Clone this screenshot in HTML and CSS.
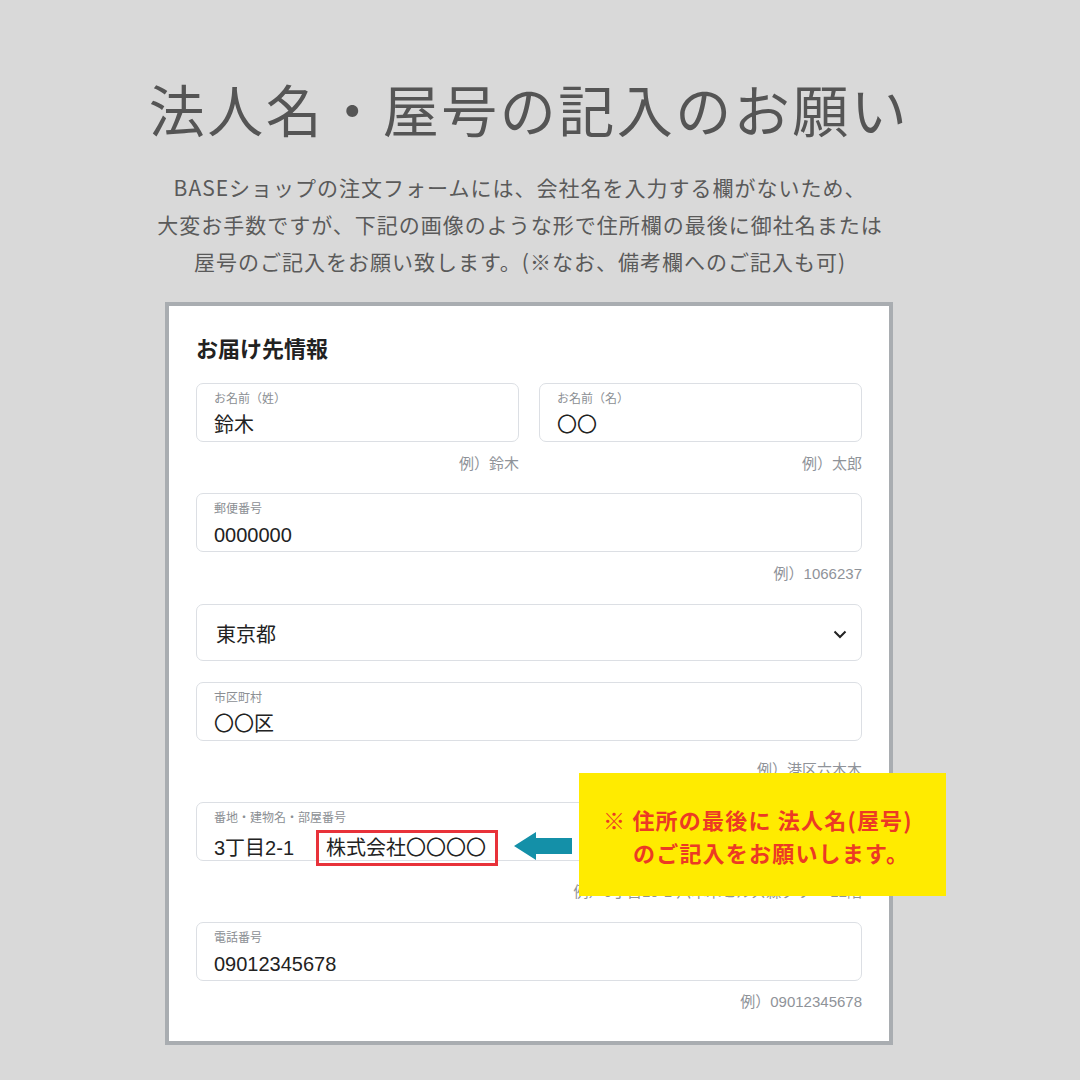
FILE: index.html
```html
<!DOCTYPE html>
<html lang="ja">

<head>
    <meta charset="UTF-8">
    <meta name="viewport" content="width=device-width, initial-scale=1.0">
    <title>法人名・屋号の記入のお願い</title>
    <link rel="stylesheet" href="styles.css">
</head>

<body>
    <main class="page">
        <h1 class="title">法人名・屋号の記入のお願い</h1>
        <p class="lead">
            BASEショップの注文フォームには、会社名を入力する欄がないため、<br>
            大変お手数ですが、下記の画像のような形で住所欄の最後に御社名または<br>
            屋号のご記入をお願い致します。(※なお、備考欄へのご記入も可)
        </p>

        <section class="card">
            <h2 class="card-title">お届け先情報</h2>

            <!-- name row: two fields side by side -->
            <div class="row">
                <div class="col">
                    <div class="field">
                        <span class="label">お名前（姓）</span>
                        <span class="value">鈴木</span>
                    </div>
                    <p class="hint">例）鈴木</p>
                </div>
                <div class="col">
                    <div class="field">
                        <span class="label">お名前（名）</span>
                        <span class="value">〇〇</span>
                    </div>
                    <p class="hint">例）太郎</p>
                </div>
            </div>

            <div class="group g-zip">
                <div class="field">
                    <span class="label">郵便番号</span>
                    <span class="value">0000000</span>
                </div>
                <p class="hint">例）1066237</p>
            </div>

            <div class="group g-pref">
                <div class="field select">
                    <span class="value">東京都</span>
                    <svg class="chevron" width="14" height="9" viewBox="0 0 14 9">
                        <polyline points="1.5,1.5 7,7 12.5,1.5" fill="none" stroke="#222" stroke-width="2" />
                    </svg>
                </div>
            </div>

            <div class="group g-city">
                <div class="field">
                    <span class="label">市区町村</span>
                    <span class="value">〇〇区</span>
                </div>
                <p class="hint hint-city">例）港区六本木</p>
            </div>

            <div class="group g-addr">
                <div class="field">
                    <span class="label">番地・建物名・部屋番号</span>
                    <span class="value value-row">
                        <span>3丁目2-1</span>
                        <span class="mark">株式会社〇〇〇〇</span>
                        <svg class="arrow" width="58" height="30" viewBox="0 0 58 30">
                            <path d="M0 15 L22 1 L22 7 L58 7 L58 23 L22 23 L22 29 Z" fill="#1490a8" />
                        </svg>
                    </span>
                </div>
                <p class="hint hint-addr">例）6丁目10-1 六本木ヒルズ森タワー 12階</p>
            </div>

            <div class="group g-tel">
                <div class="field">
                    <span class="label">電話番号</span>
                    <span class="value">09012345678</span>
                </div>
                <p class="hint hint-tel">例）09012345678</p>
            </div>

            <!-- yellow call-out laid over the form -->
            <div class="note">
                <span class="note-line">※ 住所の最後に 法人名(屋号)</span>
                <span class="note-line note-indent">のご記入をお願いします。</span>
            </div>
        </section>
    </main>
</body>

</html>
```

FILE: styles.css
```css
* {
    box-sizing: border-box;
    padding: 0;
    margin: 0;
}

body {
    background-color: #d9d9d9;
    font-family: "Noto Sans CJK JP", sans-serif;
    width: 1080px;
    height: 1080px;
    overflow: hidden;
}

.page {
    display: flex;
    flex-direction: column;
    align-items: center;
    padding: 72px 22px 0 0;
}

.title {
    font-size: 56px;
    font-weight: 400;
    line-height: 72px;
    letter-spacing: 2.5px;
    color: #555;
}

.lead {
    margin: 25px 18px 0 0;
    font-size: 21px;
    font-weight: 400;
    line-height: 37px;
    letter-spacing: 1px;
    color: #5a5a5a;
    text-align: center;
}

.card {
    position: relative;
    width: 728px;
    margin-top: 22px;
    padding: 27px 27px 29px;
    background-color: #fff;
    border: 4px solid #a9adb1;
}

.card-title {
    font-size: 22px;
    font-weight: bold;
    line-height: 28px;
    color: #222;
    margin-bottom: 22px;
}

.row {
    display: flex;
    gap: 20px;
}

.col {
    flex: 1;
}

.field {
    display: flex;
    flex-direction: column;
    height: 59px;
    padding: 6px 18px 3px 17px;
    border: 1px solid #dcdfe4;
    border-radius: 7px;
    background-color: #fff;
}

.label {
    font-size: 12px;
    line-height: 16px;
    color: #8c8f94;
}

.value {
    margin-top: 6px;
    font-family: "Liberation Sans", "Noto Sans CJK JP", sans-serif;
    font-size: 20px;
    line-height: 26px;
    color: #222;
}

.select {
    flex-direction: row;
    justify-content: space-between;
    align-items: center;
    height: 57px;
    padding: 4px 14px 0 19px;
}

.select .value {
    margin-top: 0;
}

.hint {
    margin-top: 12px;
    font-family: "Liberation Sans", "Noto Sans CJK JP", sans-serif;
    font-size: 15px;
    line-height: 20px;
    color: #8f9399;
    text-align: right;
}

.g-zip {
    margin-top: 19px;
}

.g-pref {
    margin-top: 20px;
}

.g-city {
    margin-top: 21px;
}

.hint-city {
    margin-top: 19px;
}

.g-addr {
    margin-top: 22px;
}

.hint-addr {
    margin-top: 21px;
}

.g-tel {
    margin-top: 20px;
}

.hint-tel {
    margin-top: 11px;
}

.value-row {
    display: flex;
    align-items: center;
}

.mark {
    margin: -5px 0 -5px 22px;
    padding: 2px 9px 2px 7px;
    border: 3px solid #e8323a;
    line-height: 26px;
}

.arrow {
    margin: 0 0 4px 16px;
}

.note {
    position: absolute;
    left: 410px;
    top: 467px;
    width: 367px;
    height: 123px;
    display: flex;
    flex-direction: column;
    padding: 30px 0 0 24px;
    background-color: #ffeb00;
    color: #ec3a24;
    font-size: 22px;
    font-weight: bold;
    line-height: 33px;
    letter-spacing: 1.2px;
}

.note-indent {
    padding-left: 30px;
}
```
